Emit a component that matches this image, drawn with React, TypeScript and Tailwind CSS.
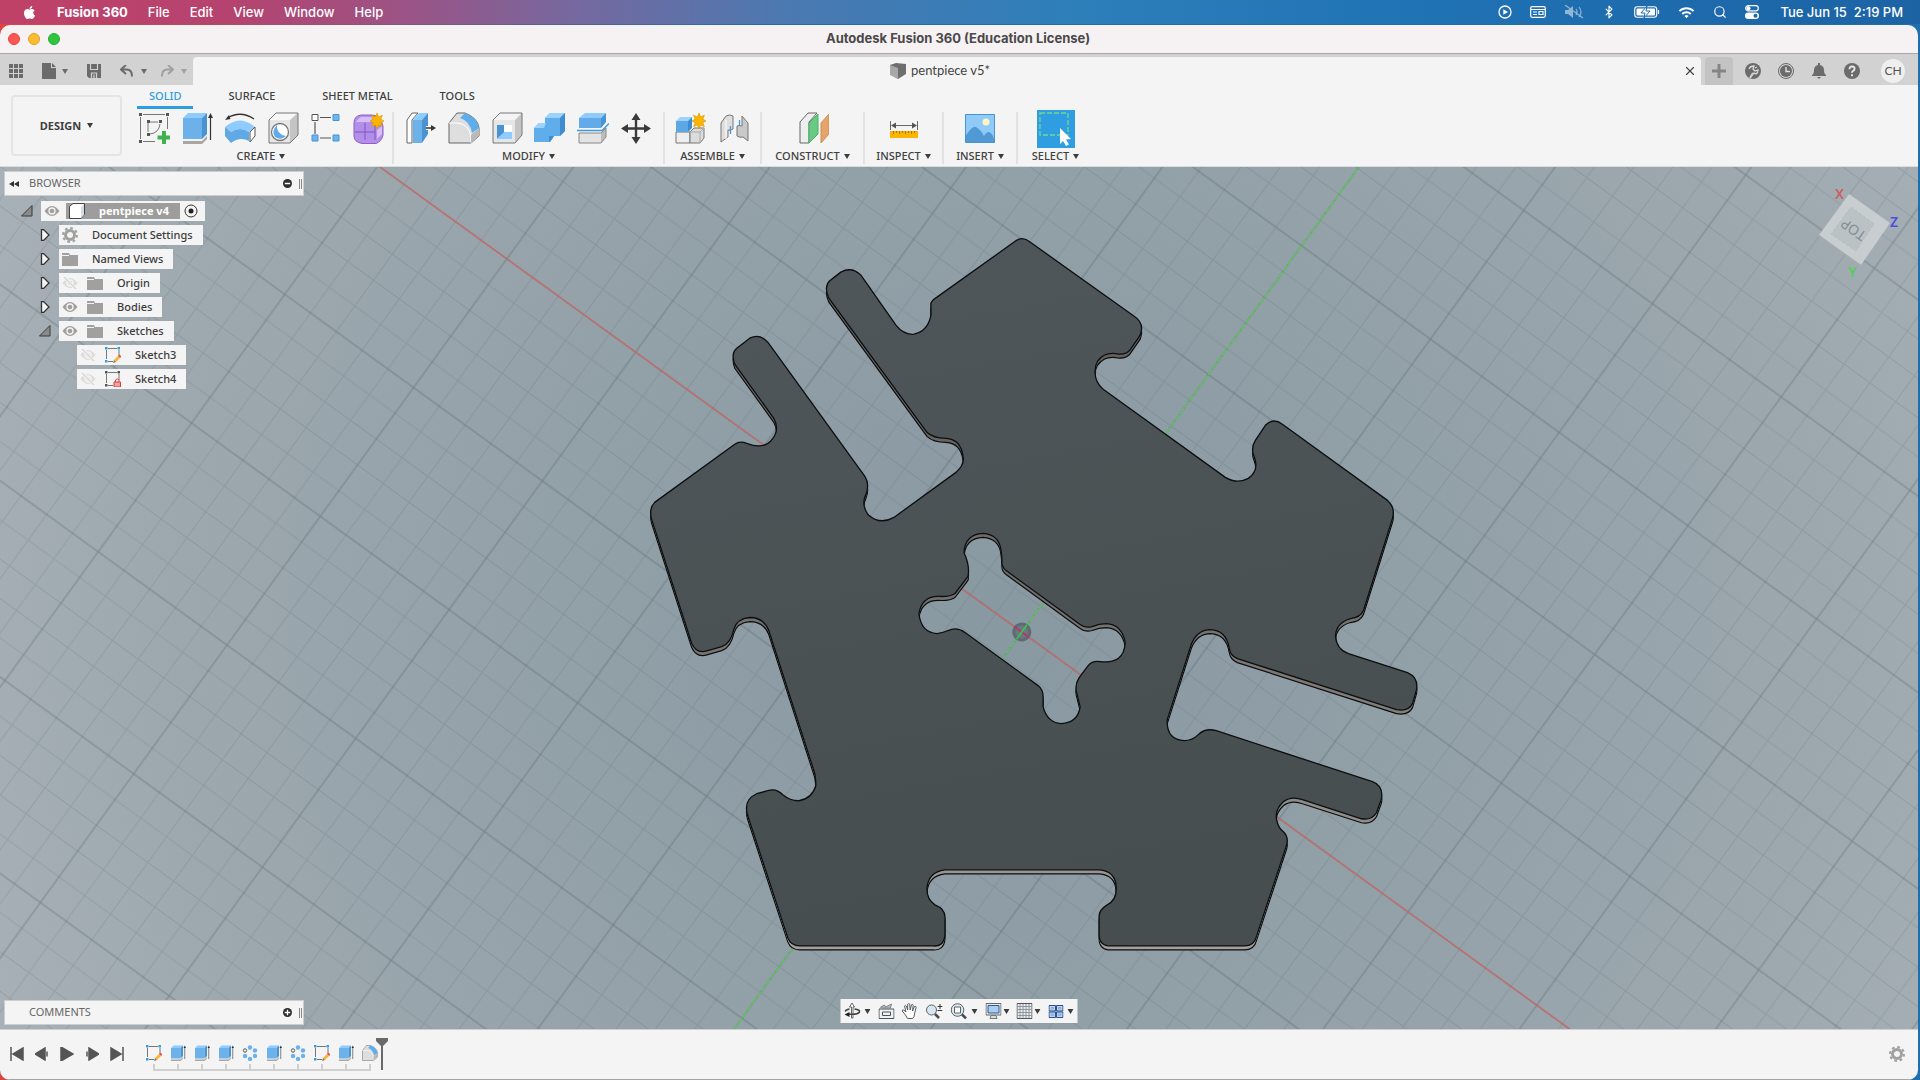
import type { ReactNode } from "react";
import { LuBluetooth, LuSearch, LuX } from "react-icons/lu";
import { FaApple } from "react-icons/fa";
import { MdWifi } from "react-icons/md";

const BODY_PATH =
  "M1014 242 Q1022 235 1030 242 L1134 316 Q1143 322 1141 331 Q1141 334 1138 338 L1131 348 Q1128 354 1119 354 " +
  "Q1110 352 1104 355 Q1095 360 1095 370 Q1094 381 1103 389 L1225 477 Q1237 484 1248 478 Q1259 470 1254 457 Q1250 448 1255 440 " +
  "L1265 425 Q1273 417 1282 424 L1387 500 Q1395 507 1392 518 L1363 610 Q1360 617 1350 618 Q1336 622 1335 635 Q1336 649 1348 653 " +
  "L1407 672 Q1418 677 1416 689 L1412 703 Q1408 711 1396 709 L1237 658 Q1230 655 1229 648 Q1226 629 1209 629 Q1196 630 1191 644 " +
  "L1167 719 Q1166 739 1184 740 Q1192 740 1198 734 Q1205 727 1216 730 L1372 781 Q1383 785 1381 798 L1376 812 Q1371 820 1361 818 " +
  "L1302 799 Q1291 795 1283 801 Q1273 810 1277 822 Q1279 828 1282 830 Q1289 836 1286 845 L1256 936 Q1254 945 1244 945 L1111 945 " +
  "Q1099 945 1099 934 L1099 915 Q1099 909 1107 904 Q1117 899 1116 886 Q1115 870 1099 869 L945 869 Q928 871 927 888 Q927 899 935 904 " +
  "Q945 908 945 916 L945 934 Q944 946 933 945 L800 945 Q791 945 788 937 L748 815 Q743 799 757 793 L768 790 Q776 787 783 794 " +
  "Q790 800 799 800 Q812 798 816 785 Q816 779 815 773 L769 630 Q764 617 750 617 Q737 618 734 629 Q731 643 722 646 L708 650 " +
  "Q697 654 692 643 L652 519 Q649 508 655 502 L735 444 Q740 440 747 443 Q765 450 773 438 Q780 429 774 418 L735 364 Q731 353 737 348 " +
  "L750 338 Q760 333 768 342 L865 476 Q870 484 866 494 Q861 504 868 514 Q880 525 894 517 L956 472 Q965 464 963 456 Q961 439 946 438 " +
  "Q933 438 927 432 L829 298 Q823 285 832 279 L841 272 Q852 266 861 275 L896 325 Q904 335 914 334 Q928 331 931 315 L931 306 Q930 301 937 297 Z " +
  "M983 533 Q965 534 964 552 Q970 565 968 576 L955 593 Q951 596 942 596 Q922 594 919 613 Q921 632 937 633 Q944 632 948 630 " +
  "Q957 626 965 632 L1038 685 Q1043 689 1043 696 L1043 706 Q1047 722 1061 723 Q1078 722 1080 706 L1076 690 Q1075 683 1079 677 " +
  "L1088 665 Q1092 660 1100 661 Q1124 664 1125 642 Q1122 624 1106 623 Q1099 623 1092 626 Q1085 628 1080 624 L1006 570 " +
  "Q1001 566 1002 560 L1001 550 Q999 534 983 533 Z";

type IconProps = { children: ReactNode; size?: string; box?: string };

function Icon({ children, size = "size-8", box = "0 0 32 32" }: IconProps) {
  return (
    <svg viewBox={box} className={`${size} shrink-0`} fill="none" aria-hidden="true">
      {children}
    </svg>
  );
}

function Caret({ className = "text-[#3c3c3c]" }: { className?: string }) {
  return (
    <svg viewBox="0 0 6 5" className={`w-1.5 h-[5px] shrink-0 ${className}`} aria-hidden="true">
      <path d="M0 0h6L3 5z" fill="currentColor" />
    </svg>
  );
}

function Star() {
  return (
    <path
      d="M24 1l1.600 4 3.800-1.800-1.600 3.900L31 9l-3.200 1.800 1.600 3.800-3.800-1.600L24 17l-1.600-4-3.800 1.600 1.600-3.800L17 9l3.200-1.900-1.600-3.900L22.400 5z"
      fill="#fbb400"
      stroke="#d99500"
      strokeWidth=".6"
    />
  );
}

/* Ribbon icons */
const icons: Record<string, ReactNode> = {
  sketch: (
    <>
      <path d="M2.500 5v22M5 2.500h22M29.500 5v12M5 29.500h12" stroke="#777" />
      <path d="M10 20V10h10M22 12q-1 9-10 10" stroke="#777" />
      <path d="M1 1h3v3H1zM28 1h3v3h-3zM1 28h3v3H1zM9 8h3v3H9zM21 8h3v3h-3zM9 21h3v3H9z" fill="#555" />
      <path d="M24 19h4v4.500h4.500v4H28V32h-4v-4.500h-4.500v-4H24z" fill="#3fb24f" />
    </>
  ),
  extrude: (
    <>
      <path d="M2 29h19l5-5v3l-5 5H2z" fill="#aaa6a3" />
      <path d="M2 6h19v21H2z" fill="#6cb1ea" />
      <path d="M2 6l5-5h19l-5 5z" fill="#8ecbff" />
      <path d="M21 6l5-5v21l-5 5z" fill="#4a93d2" />
      <path d="M29.500 4v24" stroke="#333" strokeWidth="1.200" />
      <path d="M27 6l2.500-5L32 6z" fill="#333" />
    </>
  ),
  revolve: (
    <>
      <path d="M3 6q14-8 27 1" stroke="#333" strokeWidth="1.400" />
      <path d="M1 8l4-5 1.500 4z" fill="#333" />
      <path d="M1 15q15-13 30 0l-6 5q-9-6-18 0z" fill="#8ecbff" />
      <path d="M1 15l6 5q9-6 18 0v9q-9-5-18 2l-6-7z" fill="#5fa9e6" />
      <path d="M26 20l5-5v9l-5 6z" fill="#fff" stroke="#555" />
    </>
  ),
  hole: (
    <>
      <path d="M2 8h21v23H2z" fill="#e6e6e6" />
      <path d="M2 8l7-7h22l-8 7z" fill="#f7f7f7" />
      <path d="M23 8l8-7v22l-8 8z" fill="#c4c4c4" />
      <path d="M2 8l7-7h22v22l-8 8H2z" stroke="#777" />
      <circle cx="13" cy="20" r="8.500" fill="#fff" stroke="#777" strokeWidth="1.300" />
      <path d="M10 13q-1 9 9 11-5 5-11 1-4-6 2-12z" fill="#62abea" />
    </>
  ),
  pattern: (
    <>
      <path d="M10 5.500h11M10 26h11M5 10v12" stroke="#555" strokeWidth="1.200" />
      <path d="M2 2.500h6v6H2z" fill="#fff" stroke="#555" />
      <path d="M23 2.500h6v6h-6zM2 23h6v6H2zM23 23h6v6h-6z" fill="#6cb5f0" stroke="#4a93d2" />
    </>
  ),
  form: (
    <>
      <path d="M1 11q0-7 7-8h11q8 0 11 11v9q-1 6-7 8.500H9Q1 30 1 24z" fill="#b48eea" stroke="#8a5fc9" />
      <path d="M3 10q4-6 8-5h9l-1 5H5zM24 18l5-4v8l-5 5z" fill="#d6bdf7" />
      <path d="M4 14h17v13H8q-4-1-4-5z" fill="#b28eeb" />
      <path d="M12 11v17M2 20h20M22 12v16" stroke="#8053bb" />
      <Star />
    </>
  ),
  pressPull: (
    <>
      <path d="M2 8l5-7h6l-6 7v23H2z" fill="#fff" stroke="#666" />
      <path d="M8 8l6-7h9l-6 7z" fill="#8ecbff" />
      <path d="M8 8h9v23H8z" fill="#6cb1ea" />
      <path d="M17 8l6-7v21l-6 9z" fill="#4a93d2" />
      <path d="M21 16h6" stroke="#fff" strokeWidth="4" />
      <path d="M21 16h6" stroke="#333" strokeWidth="1.400" />
      <path d="M26 13l5 3-5 3z" fill="#333" />
    </>
  ),
  fillet: (
    <>
      <path d="M1 31V11L9 1h8q13 5 14 15v8l-8 7z" fill="#dedede" stroke="#666" />
      <path d="M1 11h8q12 1 14 13v7" stroke="#fff" />
      <path d="M23 23l8-7v8l-8 7z" fill="#b9b9b9" />
      <path d="M12 6l5-5q12 4 14 15l-7 5Q22 9 12 6z" fill="#5fadeb" />
    </>
  ),
  shell: (
    <>
      <path d="M2 8h22v23H2z" fill="#e6e6e6" />
      <path d="M24 8l7-7v22l-7 8z" fill="#c4c4c4" />
      <path d="M2 8l7-7h22v22l-7 8H2z" stroke="#777" />
      <path d="M6 13h15v14H6z" fill="#fff" />
      <path d="M6 13h7v8l-7 6z" fill="#4a93d2" />
      <path d="M6 27l7-7h8v7z" fill="#8ecbff" />
    </>
  ),
  combine: (
    <>
      <path d="M0 16l5-5h6V6l5-5h15v18l-5 5h-6l-4 6H0z" fill="#5fadeb" />
      <path d="M0 16l5-5h7l-2 5zM11 6l5-5h15l-5 5z" fill="#9bd2ff" />
      <path d="M26 6l5-5v18l-5 5zM15 24h5l-4 6h-1z" fill="#3f8dce" />
    </>
  ),
  split: (
    <>
      <path d="M2 6l6-5h21l-5 5z" fill="#8ecbff" />
      <path d="M2 6h22v10H2z" fill="#62abe8" />
      <path d="M24 6l5-5v9l-5 6z" fill="#4a93d2" />
      <path d="M0 18.500h25l7-7" stroke="#3c9be0" strokeWidth="1.300" />
      <path d="M2 21h22v10H2z" fill="#e3e3e3" />
      <path d="M24 21l5-5v9l-5 6z" fill="#bbb" />
      <path d="M2 21h22l5-5v9l-5 6H2z" stroke="#888" />
    </>
  ),
  move: (
    <>
      <path d="M16 5v23M5 16.500h22" stroke="#3a3a3a" strokeWidth="2.400" />
      <path d="M16 1l4.500 7h-9zM16 32l4.500-7h-9zM1 16.500l7-4.500v9zM31 16.500l-7-4.500v9z" fill="#3a3a3a" />
    </>
  ),
  component: (
    <>
      <path d="M1 20h14v11H1z" fill="#eee" stroke="#777" />
      <path d="M15 20l4-4h10v10l-4 5H15z" fill="#dcdcdc" stroke="#777" />
      <path d="M15 20h10l4-4M25 20v11" stroke="#aaa" />
      <path d="M1 9h12v11H1z" fill="#5ba8e5" />
      <path d="M1 9l4-4h12l-4 4z" fill="#9bd2ff" />
      <path d="M13 9l4-4v11l-4 4z" fill="#3f8dce" />
      <Star />
    </>
  ),
  joint: (
    <>
      <path d="M3 11l5-7q4-2 7 0v13q-3 2-5 1v7l-7 5z" fill="#dedede" stroke="#777" />
      <path d="M8 8v19" stroke="#fff" />
      <path d="M30 29V11l-6-7v10q-3-1-5 0v10q3 2 6 1z" fill="#c9c9c9" stroke="#777" />
      <path d="M12.500 14v8M21.500 8v6" stroke="#3c9be0" strokeWidth="1.300" />
    </>
  ),
  plane: (
    <>
      <path d="M3 10l8-9h9l-8 9v21H3z" fill="#eee" stroke="#666" />
      <path d="M12 11l9-9v20l-9 9z" fill="#69cb83" stroke="#4cae68" />
      <path d="M24 11l8-9v20l-8 9z" fill="#e5a46a" stroke="#cf8e55" />
    </>
  ),
  measure: (
    <>
      <path d="M2.500 9v9M29.500 9v9M4 13.500h24" stroke="#666" />
      <path d="M3 13.500l5-3v6zM29 13.500l-5-3v6z" fill="#555" />
      <path d="M2 19h28v7H2z" fill="#fbb400" />
      <path d="M5.500 19v3M8.500 19v2M11.500 19v3M14.500 19v2M17.500 19v3M20.500 19v2M23.500 19v3M26.500 19v2" stroke="#8a6a10" strokeWidth=".8" />
    </>
  ),
  image: (
    <>
      <path d="M1.500 2.500h29v28h-29z" fill="#8fcaf8" stroke="#4a93d2" />
      <path d="M2 23q7-10 10-8 5 3 8 9 2-4 5-4 4 2 5 7v3H2z" fill="#5099d5" />
      <circle cx="22" cy="10" r="3.500" fill="#fff6c6" />
    </>
  ),
  select: (
    <>
      <path d="M3 3h28v22H3z" stroke="#73d690" strokeWidth="1.300" strokeDasharray="5 2" />
      <path d="M23 18l11 11-5 .5 3 5-3 1.500-3-5-3 3z" fill="#fff" />
    </>
  ),
};

const tabs = ["SOLID", "SURFACE", "SHEET METAL", "TOOLS"];

const groups = [
  { label: "CREATE", width: "w-[264px]", tools: ["sketch", "extrude", "revolve", "hole", "pattern", "form"] },
  { label: "MODIFY", width: "w-[271px]", tools: ["pressPull", "fillet", "shell", "combine", "split", "move"] },
  { label: "ASSEMBLE", width: "w-[97px]", tools: ["component", "joint"] },
  { label: "CONSTRUCT", width: "w-[103px]", tools: ["plane"] },
  { label: "INSPECT", width: "w-[79px]", tools: ["measure"] },
  { label: "INSERT", width: "w-[74px]", tools: ["image"] },
  { label: "SELECT", width: "w-[75px]", tools: ["select"] },
];

function MenuBar() {
  return (
    <header className="h-6 shrink-0 flex items-center justify-between pl-[22px] pr-[17px] text-white text-[13px] leading-6 font-medium bg-[linear-gradient(90deg,#c04168_0%,#b5436f_12%,#9c5385_21%,#75699f_30%,#4b79b1_41%,#2d7fba_56%,#1f72b4_75%,#1c63a4_100%)]">
      <nav className="flex items-center gap-5">
        <a href="#apple" aria-label="Apple menu"><FaApple className="size-[15px]" /></a>
        <a href="#app" className="font-bold">Fusion 360</a>
        <a href="#file">File</a>
        <a href="#edit">Edit</a>
        <a href="#view">View</a>
        <a href="#window">Window</a>
        <a href="#help">Help</a>
      </nav>
      <div className="flex items-center">
        <div className="flex items-center gap-[18px] mr-[21px]">
          <Icon size="size-[14px]" box="0 0 14 14">
            <circle cx="7" cy="7" r="6" stroke="#fff" strokeWidth="1.300" />
            <path d="M5.300 4.200v5.600L10 7z" fill="#fff" />
          </Icon>
          <Icon size="w-4 h-3" box="0 0 16 12">
            <rect x=".7" y=".7" width="14.600" height="10.600" rx="1.500" stroke="#fff" strokeWidth="1.200" />
            <path d="M1 3.500h14M3 6h4M3 8.500h4M9 5.500h4v3H9z" stroke="#fff" strokeWidth="1.200" />
          </Icon>
          <span className="opacity-50">
            <Icon size="w-5 h-[14px]" box="0 0 20 14">
              <path d="M1 5h3l5-4v12L4 9H1z" fill="#fff" />
              <path d="M12 4q2 3 0 6M15 2q4 5 0 10M1 0l18 13" stroke="#fff" strokeWidth="1.200" />
            </Icon>
          </span>
          <LuBluetooth className="size-[14px]" />
          <Icon size="w-[26px] h-3" box="0 0 26 12">
            <rect x=".7" y=".7" width="22" height="10.600" rx="2.500" stroke="#fff" strokeWidth="1.100" />
            <rect x="2.500" y="2.500" width="18.500" height="7" rx="1" fill="#fff" />
            <path d="M13 0L7 7h4l-1 5 6-7h-4z" fill="#fff" stroke="#1f6db0" />
            <path d="M24.500 4v4" stroke="#fff" strokeWidth="1.200" />
          </Icon>
          <MdWifi className="size-[17px]" />
          <LuSearch className="size-[14px]" />
          <Icon size="size-[14px]" box="0 0 14 14">
            <rect x=".7" y=".7" width="12.600" height="5.200" rx="2.600" stroke="#fff" strokeWidth="1.200" />
            <rect x="0" y="7.600" width="14" height="6.400" rx="3.200" fill="#fff" />
            <circle cx="3.500" cy="3.300" r="2" fill="#fff" />
            <circle cx="10.500" cy="10.800" r="2" fill="#1c67aa" />
          </Icon>
        </div>
        <span>Tue Jun 15&nbsp; 2:19 PM</span>
      </div>
    </header>
  );
}

function DocumentBar() {
  return (
    <div className="h-8 shrink-0 flex items-end bg-[#d2d2d2] text-[#6b6b6b] border-t border-[#a8a8a8]">
      <div className="w-[193px] h-7 shrink-0 flex items-center pl-[9px]">
        <button aria-label="Data panel">
          <Icon size="size-[14px]" box="0 0 14 14">
            <path d="M0 0h4v4H0zM5 0h4v4H5zM10 0h4v4h-4zM0 5h4v4H0zM5 5h4v4H5zM10 5h4v4h-4zM0 10h4v4H0zM5 10h4v4H5zM10 10h4v4h-4z" fill="currentColor" />
          </Icon>
        </button>
        <button aria-label="File" className="flex items-center gap-1.5 ml-[19px]">
          <Icon size="w-[14px] h-4" box="0 0 14 16">
            <path d="M0 0h9v5h5v11H0zM10 0l4 4h-4z" fill="currentColor" />
          </Icon>
          <Caret className="text-[#6b6b6b]" />
        </button>
        <button aria-label="Save" className="ml-[19px]">
          <Icon size="size-[14px]" box="0 0 14 14">
            <path d="M0 0h14v14H2l-2-2z" fill="currentColor" />
            <path d="M3.500 0v5.500h7V0M4.500 14V9h5v5M7 10.500V14" stroke="#d2d2d2" strokeWidth="1.200" />
          </Icon>
        </button>
        <button aria-label="Undo" className="flex items-center gap-[7px] ml-[19px]">
          <Icon size="w-[14px] h-3" box="0 0 14 12">
            <path d="M6 0L1 4.500 6 9M1 4.500h6q5 0 5 7" stroke="currentColor" strokeWidth="2" />
          </Icon>
          <Caret className="text-[#6b6b6b]" />
        </button>
        <button aria-label="Redo" className="flex items-center gap-[7px] ml-[13px] text-[#a0a0a0]">
          <Icon size="w-[14px] h-3" box="0 0 14 12">
            <path d="M8 0l5 4.500L8 9M13 4.500H7q-5 0-5 7" stroke="currentColor" strokeWidth="2" />
          </Icon>
          <Caret className="text-[#a0a0a0]" />
        </button>
      </div>
      <div className="flex-1 h-7 flex items-center bg-[#f4f4f4] rounded-t-sm text-[#444] text-[13px]">
        <div className="flex-1 flex items-center justify-center gap-[5px] pl-1">
          <Icon size="size-4" box="0 0 16 16">
            <path d="M0 2l6-2 10 1v10l-8 5-8-5z" fill="#6f6f6f" />
            <path d="M0 2l8 3v11l-8-4z" fill="#a8a8a8" />
          </Icon>
          <span>pentpiece v5*</span>
        </div>
        <button aria-label="Close tab" className="mr-1"><LuX className="size-[14px]" /></button>
      </div>
      <button aria-label="New tab" className="w-7 h-7 ml-1 flex items-center justify-center bg-[#c3c3c3] rounded-t text-[#858585]">
        <Icon size="size-[14px]" box="0 0 14 14">
          <path d="M7 0v14M0 7h14" stroke="currentColor" strokeWidth="3" />
        </Icon>
      </button>
      <div className="h-7 flex items-center gap-[17px] ml-3 mr-[13px]">
        <button aria-label="Extensions">
          <Icon size="size-4" box="0 0 16 16">
            <circle cx="8" cy="8" r="8" fill="currentColor" />
            <path d="M4 6q1-3 5-3l-1 3 2 2 3-1q0 3-2 4l-2-1-3 3M12 4l-2 1" stroke="#dcdcdc" strokeWidth="1.300" />
            <path d="M5 15l3-5" stroke="#d2d2d2" strokeWidth="2" />
          </Icon>
        </button>
        <button aria-label="Job status">
          <Icon size="size-4" box="0 0 16 16">
            <circle cx="8" cy="8" r="7.500" stroke="currentColor" />
            <circle cx="8" cy="8" r="6" fill="currentColor" />
            <path d="M8 4v4.500h4" stroke="#e2e2e2" strokeWidth="1.400" />
          </Icon>
        </button>
        <button aria-label="Notifications">
          <Icon size="size-4" box="0 0 16 16">
            <path d="M7 0h2v2q4 1 4 5 0 4 2 5v1H1v-1q2-1 2-5 0-4 4-5zM6 14h4l-2 2z" fill="currentColor" />
          </Icon>
        </button>
        <button aria-label="Help">
          <Icon size="size-4" box="0 0 16 16">
            <circle cx="8" cy="8" r="8" fill="currentColor" />
            <path d="M5.500 6.300q0-3 2.700-2.800 2.600.200 2.300 2.500-.2 1.300-1.500 2-1 .6-1 1.800M8 11.300v1.900" stroke="#e8e8e8" strokeWidth="1.900" />
          </Icon>
        </button>
        <button className="size-6 ml-1 rounded-full bg-[#efefef] text-xs text-[#555]">CH</button>
      </div>
    </div>
  );
}

function Ribbon() {
  return (
    <section className="h-[82px] shrink-0 flex bg-[#f4f4f4] border-b border-[#dcdcdc] text-[11px] leading-4 text-[#3f3f3f] font-medium font-['Noto_Sans',sans-serif]">
      <button className="w-[111px] h-[61px] mt-2.5 ml-[11px] mr-2 shrink-0 flex items-center justify-center gap-1.5 border-2 border-[#e4e4e4] rounded font-bold">
        DESIGN <Caret />
      </button>
      <div className="flex flex-col">
        <div className="flex gap-[23px] pl-[7px]" role="tablist">
          {tabs.map((tab, i) => (
            <button
              key={tab}
              role="tab"
              aria-selected={i === 0}
              className={
                i === 0
                  ? "h-6 px-3 pt-px border-b-[3px] border-[#2f9de2] text-[#2f9de2]"
                  : "h-6 px-3 pt-px border-b-[3px] border-transparent"
              }
            >
              {tab}
            </button>
          ))}
        </div>
        <div className="flex h-[54px] mt-px">
          {groups.map(({ label, width, tools }) => (
            <div
              key={label}
              className={`${width} h-[52px] mt-0.5 flex flex-col items-center border-r-2 border-[#e2e2e2] last:border-0`}
            >
              <div className="flex h-[38px] gap-[11px]">
                {tools.map((tool) =>
                  tool === "select" ? (
                    <button key={tool} aria-label={tool} className="w-[38px] h-[38px] -mt-0.5 bg-[#2f9de2]">
                      <Icon size="size-[38px]" box="0 0 38 38">{icons[tool]}</Icon>
                    </button>
                  ) : (
                    <button key={tool} aria-label={tool} className="size-8">
                      <Icon>{icons[tool]}</Icon>
                    </button>
                  ),
                )}
              </div>
              <button className="flex items-center gap-1 whitespace-nowrap">
                {label} <Caret />
              </button>
            </div>
          ))}
        </div>
      </div>
    </section>
  );
}

function Eye({ off = false }: { off?: boolean }) {
  return (
    <Icon size="w-4 h-3" box="0 0 16 12">
      <path d="M.5 6Q8-4 15.500 6 8 16 .5 6z" fill={off ? "#dcdcdc" : "#a0a0a0"} />
      <circle cx="8" cy="6" r="3" stroke="#f4f4f4" strokeWidth="1.300" />
      {off && <path d="M2 0l12 12" stroke="#f4f4f4" strokeWidth="3" />}
      {off && <path d="M2 0l12 12" stroke="#d4d4d4" strokeWidth="1.200" />}
    </Icon>
  );
}

function Folder() {
  return (
    <Icon size="w-4 h-3.5" box="0 0 16 14">
      <path d="M0 1h7l1 2h8v11H0z" fill="#a0a0a0" />
      <path d="M0 3.500h7" stroke="#f4f4f4" />
    </Icon>
  );
}

function Gear() {
  return (
    <Icon size="size-4" box="0 0 16 16">
      <circle cx="8" cy="8" r="4.500" stroke="#a0a0a0" strokeWidth="3" />
      <circle cx="8" cy="8" r="7" stroke="#a0a0a0" strokeWidth="2" strokeDasharray="2.750 2.750" />
    </Icon>
  );
}

function SketchGlyph({ locked = false }: { locked?: boolean }) {
  const dot = locked ? "#555" : "#2f9de2";
  return (
    <Icon size="size-4" box="0 0 16 16">
      <path d="M1.500 3v9M3 1.500h9M14 3v6M3 14.500h5" stroke="#777" />
      <path d="M0 0h2.500v2.500H0zM12.500 0H15v2.500h-2.500zM0 13h2.500v2.500H0z" fill={dot} />
      {locked ? (
        <>
          <path d="M9 11h6.500v5H9z" fill="#f0a0a0" stroke="#d84040" />
          <path d="M10.500 11V9q2-2.500 3.500 0v2" stroke="#d84040" />
        </>
      ) : (
        <>
          <path d="M9 13l4-4 2 2-4 4z" fill="#fbb72c" />
          <path d="M13 9l1.500-1.500 2 2L15 11z" fill="#e25353" />
          <path d="M9 13l2 2-3 1z" fill="#777" />
        </>
      )}
    </Icon>
  );
}

function Twisty({ open = false }: { open?: boolean }) {
  return (
    <Icon size="size-3" box="0 0 12 12">
      {open ? (
        <path d="M11 .5V11H.5z" fill="#8a8a8a" stroke="#3a3a3a" />
      ) : (
        <path d="M2.500 0.500h2L10 6l-5.500 5.500h-2z" fill="#f4f4f4" stroke="#333" strokeWidth="1.300" />
      )}
    </Icon>
  );
}

const nodes: { label: string; eye?: "on" | "off"; open?: boolean; icon: ReactNode; leaf?: boolean }[] = [
  { label: "Document Settings", icon: <Gear /> },
  { label: "Named Views", icon: <Folder /> },
  { label: "Origin", eye: "off", icon: <Folder /> },
  { label: "Bodies", eye: "on", icon: <Folder /> },
  { label: "Sketches", eye: "on", open: true, icon: <Folder /> },
  { label: "Sketch3", eye: "off", icon: <SketchGlyph />, leaf: true },
  { label: "Sketch4", eye: "off", icon: <SketchGlyph locked />, leaf: true },
];

function PanelHeader({ title, open = false }: { title: string; open?: boolean }) {
  return (
    <div className="h-[25px] w-[300px] flex items-center bg-[#f4f4f4] border border-[#cdcdcd] text-[#666] text-[11px]">
      <span className="w-6 pl-1">
        {open && (
          <Icon size="w-2.5 h-1.5" box="0 0 10 6">
            <path d="M5 0v6L0 3zM10 0v6L5 3z" fill="#333" />
          </Icon>
        )}
      </span>
      <h2 className="flex-1">{title}</h2>
      <button aria-label={open ? "Collapse" : "Expand"} className="mr-[7px]">
        <Icon size="size-[9px]" box="0 0 10 10">
          <circle cx="5" cy="5" r="5" fill="#2e2e2e" />
          <path d={open ? "M2 5h6" : "M2 5h6M5 2v6"} stroke="#fff" strokeWidth="1.400" />
        </Icon>
      </button>
      <span className="w-[3px] h-2.5 mr-px border-x border-[#888]" />
    </div>
  );
}

function BrowserTree() {
  return (
    <aside className="absolute top-1 left-1">
      <PanelHeader title="BROWSER" open />
      <ul className="flex flex-col gap-1 mt-[5px] text-[11px] leading-5 font-medium text-[#3c3c3c]">
        <li className="flex items-center pl-[17px]">
          <Twisty open />
          <div className="h-5 ml-2 pl-[3px] pr-[7px] flex items-center bg-[#f4f4f4]">
            <Eye />
            <div className="h-4 w-[114px] ml-1.5 pl-[3px] flex items-center bg-[#9d9d9d] text-white font-bold">
              <Icon size="size-4" box="0 0 16 16">
                <path d="M.5 3.500L4 .5h11.500v11l-3.500 4H.5z" fill="#fff" stroke="#444" />
                <path d="M12 4l3-3v11l-3 3z" fill="#d5dde2" />
              </Icon>
              <span className="ml-3.5 whitespace-nowrap">pentpiece v4</span>
            </div>
            <span className="ml-1">
              <Icon size="size-3.5" box="0 0 14 14">
                <circle cx="7" cy="7" r="6" stroke="#333" />
                <circle cx="7" cy="7" r="2.500" fill="#222" />
              </Icon>
            </span>
          </div>
        </li>
        {nodes.map((node) => (
          <li key={node.label} className={node.leaf ? "flex items-center pl-[73px]" : "flex items-center pl-[35px]"}>
            {!node.leaf && <span className="w-5"><Twisty open={node.open} /></span>}
            <div className="h-5 pl-[3px] pr-2.5 flex items-center bg-[#f4f4f4] whitespace-nowrap">
              {node.eye && <span className="w-[25px]"><Eye off={node.eye === "off"} /></span>}
              {node.icon}
              <span className="ml-3.5">{node.label}</span>
            </div>
          </li>
        ))}
      </ul>
    </aside>
  );
}

function Scene() {
  return (
    <svg viewBox="0 167 1918 861" preserveAspectRatio="xMidYMid slice" className="absolute inset-0 size-full" aria-label="pentpiece model">
      <defs>
        <radialGradient id="sky" gradientUnits="userSpaceOnUse" cx="1000" cy="620" r="1100">
          <stop offset="0" stopColor="#8999a1" />
          <stop offset=".4" stopColor="#92a0a8" />
          <stop offset=".75" stopColor="#9da8ae" />
          <stop offset="1" stopColor="#a7b1b7" />
        </radialGradient>
        <linearGradient id="face" x1="0" y1="0" x2=".2" y2="1">
          <stop offset="0" stopColor="#4f575a" />
          <stop offset="1" stopColor="#464e50" />
        </linearGradient>
        <linearGradient id="wall" x1="0" y1="0" x2="0" y2="1">
          <stop offset="0" stopColor="#5c5855" />
          <stop offset=".5" stopColor="#726e6b" />
          <stop offset="1" stopColor="#a39f9b" />
        </linearGradient>
        <pattern id="grid" width="158.800" height="158.800" patternUnits="userSpaceOnUse" patternTransform="translate(1021.700 631.500) rotate(35.930)">
          <path d="M31.760 0v158.800M63.520 0v158.800M95.280 0v158.800M127.040 0v158.800M0 31.760h158.800M0 63.520h158.800M0 95.280h158.800M0 127.040h158.800" stroke="#4d5c64" strokeOpacity=".19" />
          <path d="M0 0v158.800M158.800 0v158.800M0 0h158.800M0 158.800h158.800" stroke="#3c4a50" strokeOpacity=".4" />
        </pattern>
      </defs>
      <rect x="-1000" y="-1000" width="4000" height="4000" fill="url(#sky)" />
      <rect x="-1000" y="-1000" width="4000" height="4000" fill="url(#grid)" />
      <g transform="translate(1021.700 631.500) rotate(35.930)">
        <path d="M-1500 0h3000" stroke="#dd5f5c" />
        <path d="M0-1500v3000" stroke="#58cf54" strokeDasharray="7 1" strokeWidth="1.200" />
        <circle r="8" fill="#6c7781" stroke="#5f6a71" strokeWidth="3" />
        <path d="M-9 0H9" stroke="#c02f66" strokeWidth="1.500" />
        <path d="M0-9V9" stroke="#2fcf45" strokeWidth="1.500" />
      </g>
      <g fillRule="evenodd" strokeLinejoin="round">
        <path d={BODY_PATH} transform="translate(0 4)" fill="url(#wall)" stroke="#0c0e0f" strokeWidth="1.200" />
        <path d={BODY_PATH} transform="translate(0 2)" fill="url(#wall)" />
        <path d={BODY_PATH} fill="url(#face)" stroke="#0c0e0f" strokeWidth="1.300" />
      </g>
    </svg>
  );
}

function ViewCube() {
  return (
    <svg viewBox="0 0 90 100" className="absolute top-[18px] right-[15px] w-[90px] h-[100px] text-[14px]">
      <path d="M36 9l41 29-29 42-42-30z" fill="#c8cdd0" />
      <path d="M6 50l42 30-1 1-42-30z" fill="#a7acaf" />
      <path d="M38 22l23 17-18 27-25-17z" fill="#bac2c6" stroke="#b4bcc0" strokeDasharray="3 2" />
      <text x="40" y="45" textAnchor="middle" dominantBaseline="central" fill="#858d91" transform="rotate(216 40 45)">TOP</text>
      <text x="22" y="14" fill="#cc5f63" fontWeight="600">X</text>
      <text x="77" y="42" fill="#4a4fe0" fontWeight="600">Z</text>
      <text x="35" y="92" fill="#4fd054" fontWeight="600">Y</text>
    </svg>
  );
}

function NavBar() {
  return (
    <div className="absolute bottom-1.5 left-1/2 -translate-x-1/2 h-6 w-[237px] flex items-center justify-between pl-1 pr-1 bg-[#f4f4f4]">
      <button aria-label="Orbit" className="flex items-center gap-1">
        <Icon size="size-4" box="0 0 16 16">
          <path d="M7 15V4H5l2.500-4L10 4H8.500v11z" fill="#fff" stroke="#444" strokeWidth=".8" />
          <path d="M10 6q6 1 5 3-2 3-12 2M5 6q-4 1-4.500 2.500" stroke="#444" strokeWidth="1.600" />
          <path d="M0 11.500L5 9v5z" fill="#222" />
        </Icon>
        <Caret />
      </button>
      <button aria-label="Look at">
        <Icon size="size-4" box="0 0 16 16">
          <path d="M.5 6h15v9.500H.5zM4 9h8v3.500H4z" fill="#eef1f3" stroke="#4a545a" />
          <path d="M2 4l4-2 1 2 6-3-1 4H3z" fill="#b8c0c5" stroke="#6a7479" strokeWidth=".8" />
        </Icon>
      </button>
      <button aria-label="Pan">
        <Icon size="size-4" box="0 0 16 16">
          <path d="M4 12L.7 8q0-1.500 1.500-1L4.500 9 3 3q.8-1.500 1.800 0l1.400 4V1.200q1-1.400 2 0L8.700 7 10 1.800q1.300-1 1.700.4L11 8l2-4.500q1.600-.6 1.600.8L13 11q0 3-2 4.500H6z" fill="#fff" stroke="#444b50" strokeWidth=".9" />
        </Icon>
      </button>
      <button aria-label="Zoom">
        <Icon size="w-[17px] h-4" box="0 0 17 16">
          <circle cx="6" cy="7" r="5" fill="#d8e6ef" stroke="#59636a" />
          <path d="M9.500 11l4 4" stroke="#444c51" strokeWidth="2.500" />
          <path d="M12 3.500h5M14.500 1v5M12 7.500h5" stroke="#333" />
        </Icon>
      </button>
      <button aria-label="Fit" className="flex items-center gap-1">
        <Icon size="w-[17px] h-4" box="0 0 17 16">
          <circle cx="7" cy="7" r="6.300" fill="#dce6ec" stroke="#59636a" />
          <path d="M4 4h6v6H4z" fill="#fff" stroke="#59636a" />
          <path d="M11.500 11.500l4 4" stroke="#444c51" strokeWidth="2.500" />
        </Icon>
        <Caret />
      </button>
      <button aria-label="Display settings" className="flex items-center gap-0.5">
        <Icon size="size-4" box="0 0 16 16">
          <path d="M.5.500h15v11.500H.5z" fill="#eee" stroke="#666" />
          <path d="M2.500 2.500h11v7.500h-11z" fill="#a9cdf0" stroke="#2d5a99" />
          <path d="M5.500 12.500h5l1 3h-7z" fill="#ddd" stroke="#777" />
        </Icon>
        <Caret />
      </button>
      <button aria-label="Grid and snaps" className="flex items-center gap-0.5">
        <Icon size="size-4" box="0 0 16 16">
          <path d="M.5.500h15v15H.5z" fill="#e8ecee" stroke="#555" />
          <path d="M3.500 1v14M6.500 1v14M9.500 1v14M12.500 1v14M1 3.500h14M1 6.500h14M1 9.500h14M1 12.500h14" stroke="#899197" strokeWidth=".9" />
        </Icon>
        <Caret />
      </button>
      <button aria-label="Viewports" className="flex items-center gap-1">
        <Icon size="w-[15px] h-[13px]" box="0 0 15 13">
          <path d="M.5.500h6.500v5.500H.5zM8 .5h6.500v5.500H8zM.5 7h6.500v5.500H.5zM8 7h6.500v5.500H8z" fill="#b8d4f2" stroke="#2d4f8c" />
          <path d="M2.500 2.500h2.500v1.500H2.500zM10 2.500h2.500v1.500H10zM2.500 9h2.500v1.500H2.500zM10 9h2.500v1.500H10z" stroke="#7fa5d4" strokeWidth=".8" />
        </Icon>
        <Caret />
      </button>
    </div>
  );
}

function Feature({ kind }: { kind: string }) {
  if (kind === "sketch") return <SketchGlyph />;
  if (kind !== "pattern") return <Icon size="size-4">{icons[kind]}</Icon>;
  return (
    <Icon size="size-4" box="0 0 16 16">
      <circle cx="3" cy="5.500" r="1.700" stroke="#555" />
      <g fill="#6cb1ea">
        <circle cx="8" cy="2.500" r="2.200" />
        <circle cx="13" cy="5.500" r="2.200" />
        <circle cx="13" cy="11" r="2.200" />
        <circle cx="8" cy="14" r="2.200" />
        <circle cx="3" cy="11" r="2.200" />
      </g>
    </Icon>
  );
}

const features = ["sketch", "extrude", "extrude", "extrude", "pattern", "extrude", "pattern", "sketch", "extrude", "fillet"];

const playback = [
  { label: "To start", d: "M1 0v14M13 1v12L3 7z" },
  { label: "Step back", d: "M10 1v12L0 7zM12 4.500v5" },
  { label: "Play", d: "M1 0l12 7-12 7z" },
  { label: "Step forward", d: "M4 1v12l10-6zM2 4.500v5" },
  { label: "To end", d: "M13 0v14M1 1v12l10-6z" },
];

function Timeline() {
  return (
    <footer className="h-[51px] shrink-0 flex items-start pl-[10px] pr-[13px] bg-[#f4f4f4] border-t border-[#cfcfcf] border-b border-b-[#a5a5a5]">
      <div className="flex gap-[11px] mt-[17px]">
        {playback.map(({ label, d }) => (
          <button key={label} aria-label={label}>
            <Icon size="size-[14px]" box="0 0 14 14">
              <path d={d} fill="#555" stroke="#555" strokeWidth="1.500" />
            </Icon>
          </button>
        ))}
      </div>
      <div className="flex ml-[18px] mt-2">
        <div className="pt-[7px]">
          <div className="flex">
            {features.map((kind, i) => (
              <div key={i} className="w-6 flex flex-col items-center gap-0.5">
                <button aria-label={`${kind} ${i + 1}`}><Feature kind={kind} /></button>
                <Icon size="w-6 h-2" box="0 0 24 8">
                  <path
                    d={i === 0 ? "M12 1v6h12" : i === features.length - 1 ? "M12 1v6H0" : "M12 1v6M0 7h24"}
                    stroke="#cfcfcf"
                    strokeWidth="2"
                  />
                </Icon>
              </div>
            ))}
          </div>
        </div>
        <svg viewBox="0 0 12 32" className="w-3 h-8 -ml-1.5" aria-label="Timeline marker">
          <path d="M0 0h12v3L7 8v24H5V8L0 3z" fill="#6a6a6a" />
        </svg>
      </div>
      <button aria-label="Timeline settings" className="ml-auto mt-4"><Gear /></button>
    </footer>
  );
}

export default function App() {
  return (
    <div className="h-screen flex flex-col overflow-hidden bg-[linear-gradient(90deg,#e0433f_0%,#1f6fae_40%,#1f6fae_100%)] font-['Inter',sans-serif]">
      <MenuBar />
      <main className="flex-1 min-h-0 mr-0.5 mt-px flex flex-col rounded-[10px] overflow-hidden font-['Lato','Noto_Sans',sans-serif]">
        <div className="h-7 shrink-0 flex items-center bg-[#f6f2f4] pl-2 font-['Inter',sans-serif]">
          <div className="w-[52px] flex gap-2">
            <button aria-label="Close" className="size-3 rounded-full bg-[#fc5753] border border-[#e0443e]" />
            <button aria-label="Minimize" className="size-3 rounded-full bg-[#fdbc2f] border border-[#dea123]" />
            <button aria-label="Zoom window" className="size-3 rounded-full bg-[#2fc63c] border border-[#27ad32]" />
          </div>
          <h1 className="flex-1 pr-[62px] text-center text-[13px] font-bold text-[#4b484a]">
            Autodesk Fusion 360 (Education License)
          </h1>
        </div>
        <DocumentBar />
        <Ribbon />
        <div className="relative flex-1 min-h-0 overflow-hidden font-['Noto_Sans',sans-serif]">
          <Scene />
          <ViewCube />
          <BrowserTree />
          <NavBar />
          <div className="absolute bottom-1 left-1">
            <PanelHeader title="COMMENTS" />
          </div>
        </div>
        <Timeline />
      </main>
    </div>
  );
}
